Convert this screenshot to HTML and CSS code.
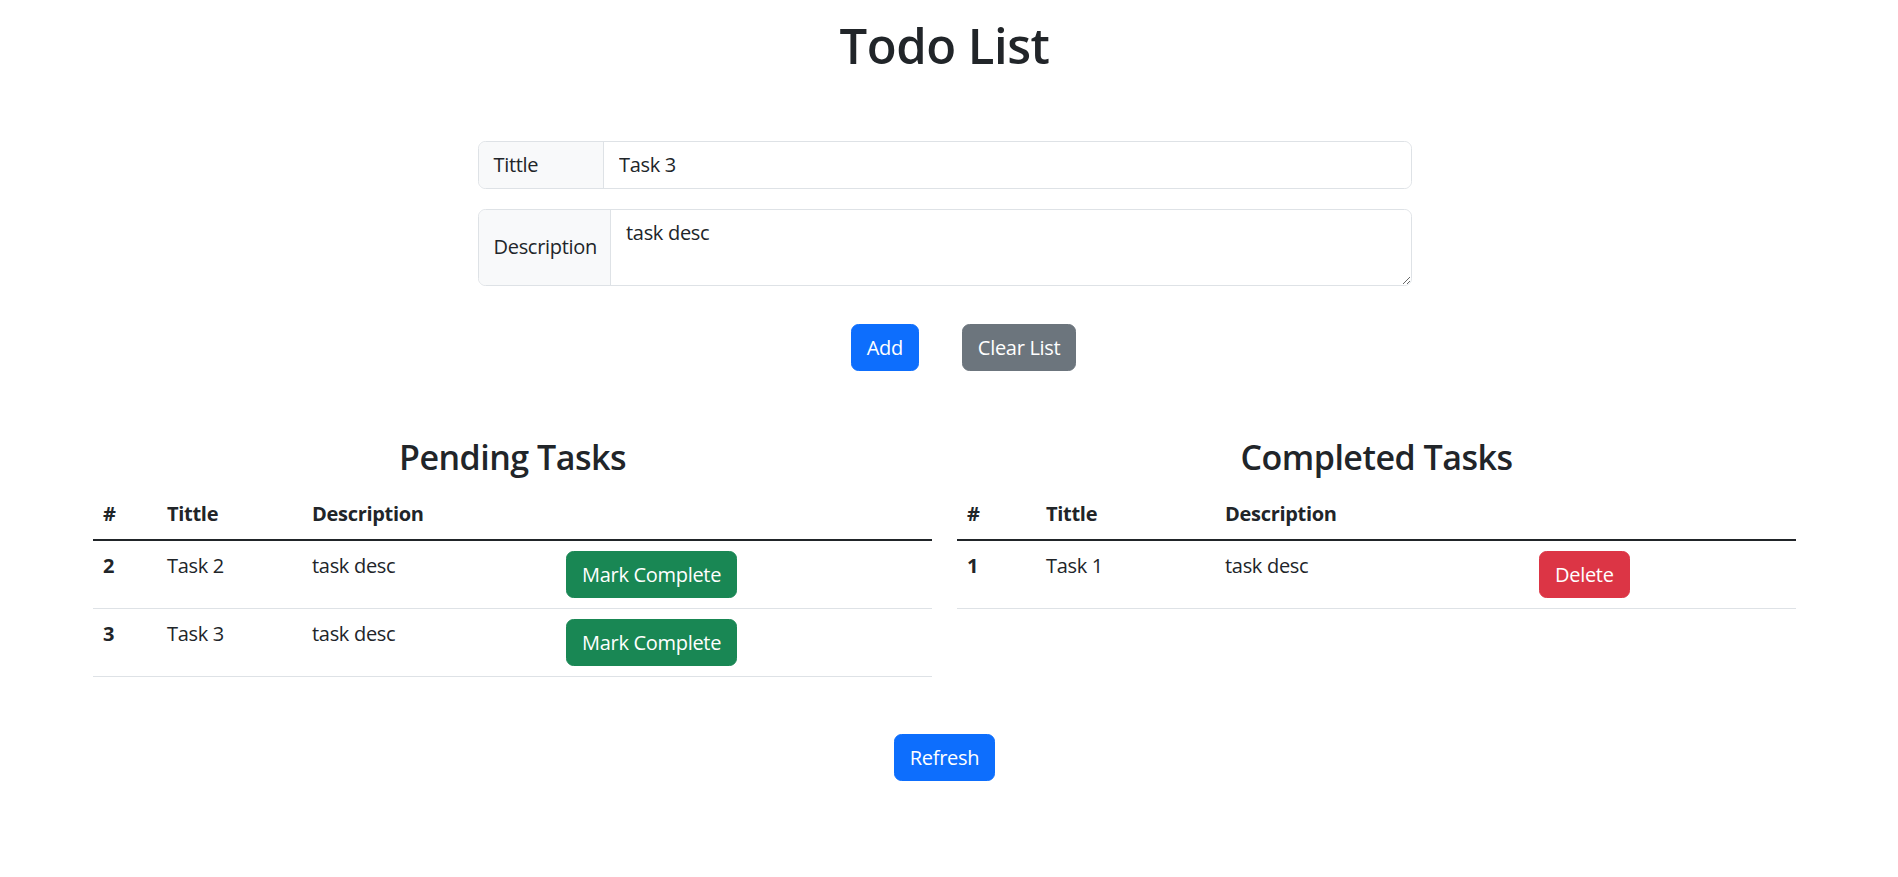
FILE: index.html
```html
<!DOCTYPE html>
<html lang="en">
<head>
<meta charset="utf-8">
<title>Todo List</title>
<link rel="stylesheet" href="styles.css">
</head>
<body>
<div class="page">
  <h1 class="title">Todo List</h1>

  <form class="todo-form">
    <div class="input-group">
      <span class="group-label label-title">Tittle</span>
      <input class="field" type="text" value="Task 3">
    </div>
    <div class="input-group">
      <span class="group-label label-desc">Description</span>
      <textarea class="field area" rows="2">task desc</textarea>
    </div>
  </form>

  <div class="actions">
    <button class="btn btn-primary">Add</button>
    <button class="btn btn-secondary">Clear List</button>
  </div>

  <div class="lists">
    <section class="list">
      <h2 class="list-title">Pending Tasks</h2>
      <table class="table">
        <colgroup>
          <col class="p1"><col class="p2"><col class="p3"><col class="p4">
        </colgroup>
        <thead>
          <tr><th>#</th><th>Tittle</th><th>Description</th><th></th></tr>
        </thead>
        <tbody>
          <tr><th>2</th><td>Task 2</td><td>task desc</td><td><button class="btn btn-success">Mark Complete</button></td></tr>
          <tr><th>3</th><td>Task 3</td><td>task desc</td><td><button class="btn btn-success">Mark Complete</button></td></tr>
        </tbody>
      </table>
    </section>
    <section class="list">
      <h2 class="list-title">Completed Tasks</h2>
      <table class="table">
        <colgroup>
          <col class="c1"><col class="c2"><col class="c3"><col class="c4">
        </colgroup>
        <thead>
          <tr><th>#</th><th>Tittle</th><th>Description</th><th></th></tr>
        </thead>
        <tbody>
          <tr><th>1</th><td>Task 1</td><td>task desc</td><td><button class="btn btn-danger">Delete</button></td></tr>
        </tbody>
      </table>
    </section>
  </div>

  <div class="refresh-row">
    <button class="btn btn-primary">Refresh</button>
  </div>
</div>
</body>
</html>
```

FILE: styles.css
```css
* { box-sizing: border-box; }

html, body {
  margin: 0;
  padding: 0;
  background: #fff;
}

body {
  font-family: "Open Sans", "Noto Sans", "Liberation Sans", sans-serif;
  font-size: 20px;
  line-height: 30px;
  letter-spacing: -0.3px;
  color: #212529;
}

.page {
  padding: 15px 9px 40px 0;
}

.title {
  margin: 0 0 66px;
  font-size: 49px;
  line-height: 60px;
  font-weight: 600;
  letter-spacing: -0.5px;
  text-align: center;
}

.todo-form {
  width: 934px;
  margin: 0 auto;
}

.input-group {
  display: flex;
  align-items: stretch;
  border: 1px solid #dee2e6;
  border-radius: 7.5px;
  margin-bottom: 20.5px;
  overflow: hidden;
}

.group-label {
  display: flex;
  align-items: center;
  padding: 0 15px;
  background: #f8f9fa;
  border-right: 1px solid #dee2e6;
  white-space: nowrap;
  color: #212529;
}

.label-title { width: 125.5px; }
.label-desc { width: 132.5px; }

.field {
  flex: 1;
  border: 0;
  outline: none;
  font: inherit;
  letter-spacing: inherit;
  color: #212529;
  padding: 7.5px 15px;
  height: 45.5px;
  background: #fff;
}

.area {
  height: 74.5px;
  resize: vertical;
  line-height: 30px;
  padding: 7.5px 15px;
}

.actions {
  display: flex;
  justify-content: center;
  gap: 43px;
  padding-left: 38px;
  margin-top: 38.5px;
}

.btn {
  font: inherit;
  letter-spacing: inherit;
  line-height: 30px;
  padding: 7.5px 15px;
  border: 1px solid transparent;
  border-radius: 7.5px;
  color: #fff;
  cursor: pointer;
}

.btn-primary { background: #0d6efd; border-color: #0d6efd; }
.btn-secondary { background: #6c757d; border-color: #6c757d; }
.btn-success { background: #198754; border-color: #198754; }
.btn-danger { background: #dc3545; border-color: #dc3545; }

.lists {
  width: 1703px;
  margin: 65px auto 0;
  display: flex;
  gap: 25px;
}

.list {
  width: 839px;
}

.list-title {
  margin: 0 0 10px;
  font-size: 34px;
  line-height: 43px;
  font-weight: 600;
  letter-spacing: -0.5px;
  text-align: center;
}

.table {
  width: 100%;
  border-collapse: collapse;
  table-layout: fixed;
}

.table th,
.table td {
  padding: 10px;
  text-align: left;
  vertical-align: top;
  border-bottom: 1px solid #dee2e6;
}

.table th { font-weight: 700; }

.table tbody {
  border-top: 2px solid #212529;
}

.p1 { width: 64px; }
.p2 { width: 145px; }
.p3 { width: 254px; }
.p4 { width: 376px; }

.c1 { width: 79px; }
.c2 { width: 179px; }
.c3 { width: 314px; }
.c4 { width: 267px; }

.refresh-row {
  display: flex;
  justify-content: center;
  margin-top: 57px;
}
```
